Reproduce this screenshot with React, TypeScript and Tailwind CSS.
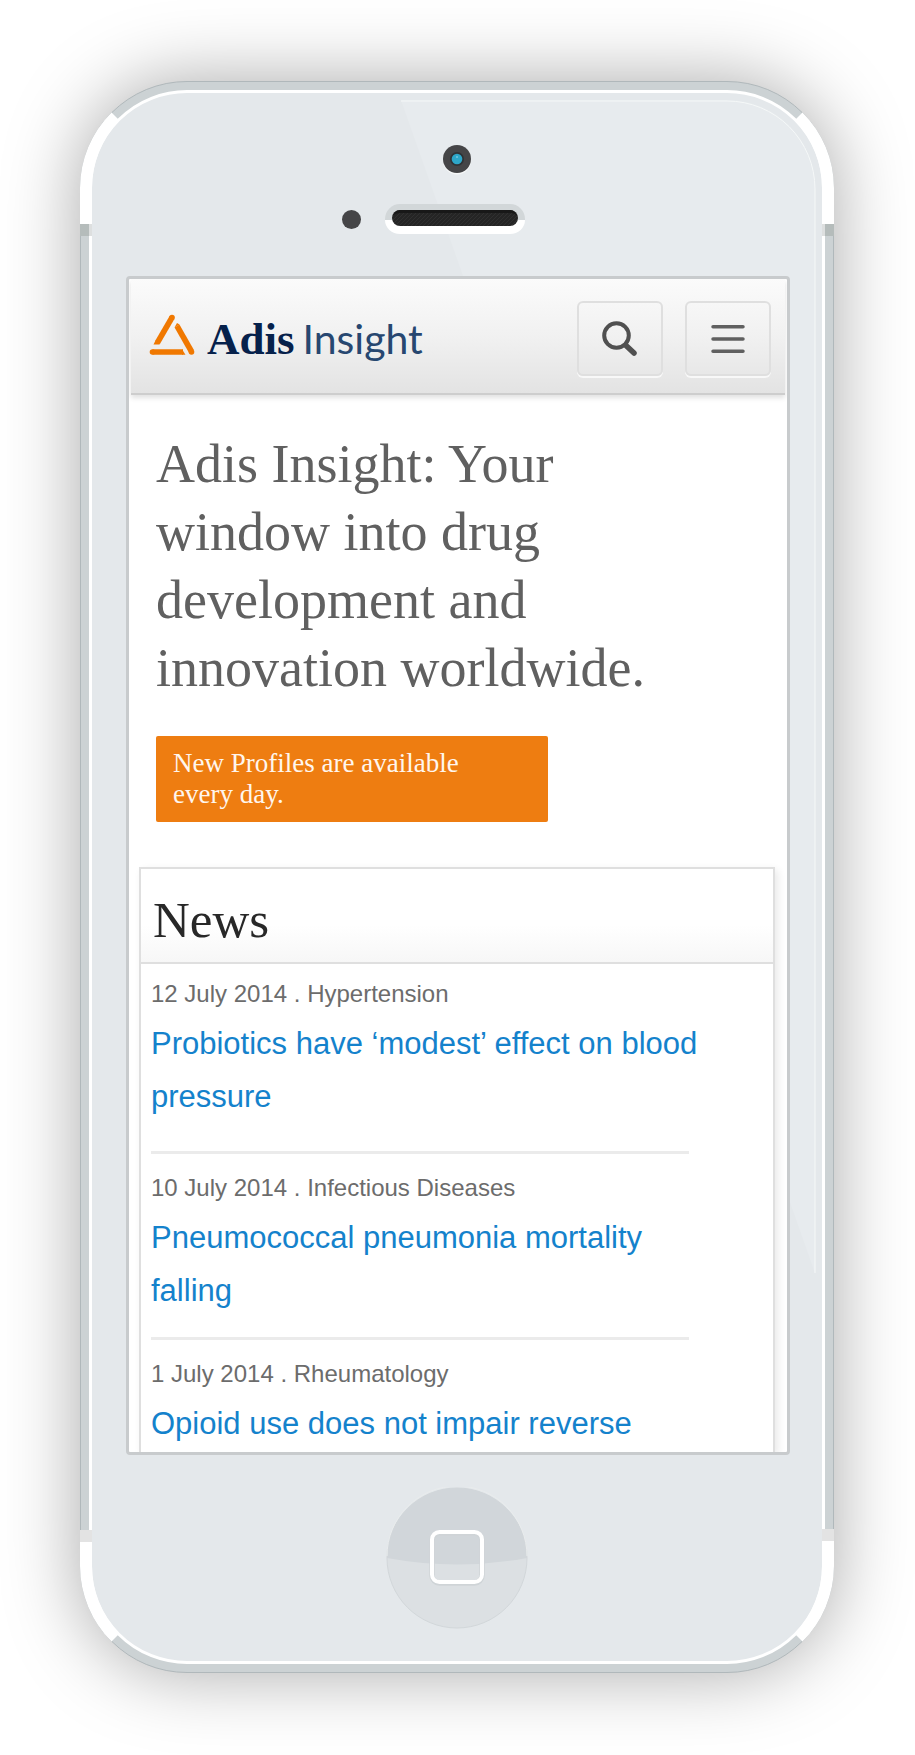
import React from "react";

type NewsItem = { date: string; topic: string; title: string; spacing: string };

const news: NewsItem[] = [
  { date: "12 July 2014", topic: "Hypertension", title: "Probiotics have ‘modest’ effect on blood pressure", spacing: "pt-3 pb-7" },
  { date: "10 July 2014", topic: "Infectious Diseases", title: "Pneumococcal pneumonia mortality falling", spacing: "pt-4 pb-5" },
  { date: "1 July 2014", topic: "Rheumatology", title: "Opioid use does not impair reverse", spacing: "pt-4 pb-[2px]" },
];

/* White antenna segment that wraps one corner of the metal rim. */
function CornerCap({ className }: { className: string }) {
  return (
    <svg aria-hidden="true" viewBox="0 0 42 143" className={`absolute h-[143px] w-[42px] ${className}`}>
      <path d="M0 143V107A107 107 0 0 1 31.5 31.5L39.5 39.5A95 95 0 0 0 12 107V143Z" fill="#fff" />
    </svg>
  );
}

/* The same segment for the lower corners, which is a little shorter. */
function LowerCap({ className }: { className: string }) {
  return (
    <svg aria-hidden="true" viewBox="0 0 42 132" className={`absolute h-[132px] w-[42px] ${className}`}>
      <path d="M0 0V25A107 107 0 0 0 31.5 100.5L39.5 92.5A95 95 0 0 1 12 25V0Z" fill="#fff" />
    </svg>
  );
}

function Gloss() {
  return (
    <svg aria-hidden="true" viewBox="0 0 415 1174" className="absolute top-[7px] right-[6px] h-[1174px] w-[415px]">
      <path d="M0 0H326A88 88 0 0 1 414 88V1173Z" fill="#e7ebee" />
      <path d="M0 1H326A88 88 0 0 1 414 89V1173" fill="none" stroke="#f5f8f8" strokeWidth="1" />
    </svg>
  );
}

function Logo() {
  return (
    <a href="#home" aria-label="Adis Insight" className="flex items-start">
      <svg aria-hidden="true" viewBox="0 0 46 44" className="mt-3 h-11 w-[46px] shrink-0">
        <g stroke="#f07800" strokeWidth="5.600" fill="none">
          <path d="M23 4.500L8.500 29.500" />
          <path d="M3.500 39H34" />
          <path d="M28 13L42.500 38.500" />
        </g>
        <circle cx="23" cy="4.500" r="2.800" fill="#f07800" />
        <circle cx="3.500" cy="39" r="2.800" fill="#f07800" />
        <circle cx="42.500" cy="39" r="2.800" fill="#f07800" />
        <path d="M4.500 31.500L10.500 31.500L11 30.500L6.500 27.500Z" fill="#f07800" />
        <path d="M33 36.200L36.500 41.800H33Z" fill="#f07800" />
        <path d="M25.500 14.500L28 10L30.500 11.600Z" fill="#f07800" />
      </svg>
      <span className="mt-2 ml-3 flex items-baseline gap-2 leading-[60px] whitespace-nowrap">
        <span className="font-['Liberation_Serif',serif] text-[45px] font-bold text-[#06214b]">Adis</span>
        <span className="font-['Lato',sans-serif] text-[41px] font-normal text-[#274770]">Insight</span>
      </span>
    </a>
  );
}

const toolButton =
  "flex h-[75px] w-[86px] items-center justify-center rounded-md border-2 border-[#dfdfdf] shadow-[0_2px_0_#f8f8f8]";

function SiteHeader() {
  return (
    <header className="mx-[2px] flex h-[116px] items-start justify-between border-b-2 border-[#cdcdcd] bg-linear-to-b from-[#fbfbfb] via-[#f1f1f1] to-[#e3e3e3] pt-[22px] pr-[14px] pl-[18px] shadow-[0_3px_5px_rgba(0,0,0,0.12)]">
      <Logo />
      <div className="flex gap-[22px]">
        <button type="button" aria-label="Search" className={toolButton}>
          <svg aria-hidden="true" viewBox="0 0 38 38" className="h-[38px] w-[38px]" fill="none" stroke="#505050">
            <circle cx="15.5" cy="15.5" r="12.3" strokeWidth="4" />
            <path d="M25 25.5L33 33" strokeWidth="5.500" strokeLinecap="round" />
          </svg>
        </button>
        <button type="button" aria-label="Menu" className={toolButton}>
          <svg aria-hidden="true" viewBox="0 0 34 30" className="h-[30px] w-[34px]" stroke="#606060" strokeWidth="3.500" strokeLinecap="round">
            <path d="M2 2.700H32M2 15H32M2 27.300H32" />
          </svg>
        </button>
      </div>
    </header>
  );
}

function Screen() {
  return (
    <main className="relative overflow-hidden rounded-[4px] border-[3px] border-[#c8cbcd] bg-white">
      <SiteHeader />
      <section className="pt-[35px] pr-16 pl-[27px]">
        <h1 className="max-w-[520px] font-['Liberation_Serif',serif] text-[54px] leading-[68px] text-[#606060]">
          Adis Insight: Your window into drug development and innovation worldwide.
        </h1>
        <p className="mt-[34px] max-w-[392px] rounded-[2px] bg-[#ee7d11] pt-[12px] pr-20 pb-3 pl-[17px] font-['Liberation_Serif',serif] text-[27px] leading-[31px] text-[#fff6ee]">
          New Profiles are available every day.
        </p>
      </section>
      <section className="mt-[45px] mr-3 ml-[10px] border-x-2 border-t-2 border-[#dfdfdf] shadow-[3px_3px_8px_rgba(0,0,0,0.09)]">
        <h2 className="border-b-2 border-[#dfdfdf] bg-linear-to-b from-white from-60% to-[#f7f7f7] pt-[21px] pb-[12px] pl-3 font-['Liberation_Serif',serif] text-[51px] leading-[60px] text-[#282828]">
          News
        </h2>
        <ul className="pr-[84px] pl-[10px] font-['Liberation_Sans',sans-serif]">
          {news.map((item, index) => (
            <li
              key={item.title}
              className={`${item.spacing} ${index < news.length - 1 ? "border-b-[3px] border-[#ebebeb]" : ""}`}
            >
              <p className="mb-[5px] text-[24px] leading-[36px] text-[#6c6c6c]">
                {item.date} . {item.topic}
              </p>
              <a href="#news" className="-mr-10 block text-[31px] leading-[53px] text-[#1482cc]">
                {item.title}
              </a>
            </li>
          ))}
        </ul>
      </section>
    </main>
  );
}

function Earpiece() {
  return (
    <svg aria-hidden="true" viewBox="0 0 140 30" className="h-[30px] w-[140px]">
      <defs>
        <pattern id="mesh" width="4" height="4" patternUnits="userSpaceOnUse">
          <rect width="4" height="4" fill="#252525" />
          <path d="M0 4L4 0" stroke="#303030" strokeWidth="1" />
        </pattern>
      </defs>
      <path d="M0 16V15A15 15 0 0 1 15 0H125A15 15 0 0 1 140 15V16Z" fill="#d2d7d9" />
      <path d="M0 16H140A15 14 0 0 1 125 30H15A15 14 0 0 1 0 16Z" fill="#fff" />
      <rect x="7" y="6" width="126" height="16" rx="8" fill="url(#mesh)" />
      <path d="M8 12A8 8 0 0 1 15 6H125A8 8 0 0 1 132 12A8 6 0 0 0 125 9H15A8 6 0 0 0 8 12Z" fill="#181818" />
    </svg>
  );
}

function HomeButton() {
  return (
    <button type="button" aria-label="Home" className="relative mx-auto mt-8 block h-[142px] w-[142px] rounded-full">
      <svg aria-hidden="true" viewBox="0 0 142 142" className="h-full w-full">
        <circle cx="71" cy="71" r="70" fill="#dce0e3" stroke="#d2d7da" />
        <path d="M1 71A70 70 0 0 1 141 71Q71 84 1 71Z" fill="#d1d6da" />
        <path d="M1 69A70 70 0 0 1 141 69" fill="none" stroke="#e9eced" />
        <rect x="46" y="46" width="50" height="50" rx="7.500" fill="none" stroke="#cfd4d7" strokeWidth="5.500" />
        <rect x="46" y="45" width="50" height="50" rx="7.500" fill="none" stroke="#fff" strokeWidth="4" />
      </svg>
    </button>
  );
}

export default function App() {
  return (
    <div className="min-h-screen overflow-hidden bg-white pt-[81px] pr-[81px] pb-20 pl-20">
      <div className="relative mx-auto max-w-[754px] rounded-[107px] border border-[#b0b8bb] bg-[#ccd2d4] p-2 shadow-[0_0_76px_rgba(0,0,0,0.34)]">
        <div className="relative rounded-[98px] border-[3px] border-white bg-[#e4e8eb] pt-[52px] pb-8">
          <Gloss />
          <svg aria-hidden="true" viewBox="0 0 30 30" className="relative mx-auto block h-[30px] w-[30px]">
            <circle cx="15" cy="15.500" r="14" fill="#f6f8f8" />
            <circle cx="15" cy="14" r="14" fill="#454547" />
            <circle cx="15" cy="14" r="7" fill="#2e3336" />
            <circle cx="15" cy="14" r="5.300" fill="#2da6c8" />
            <path d="M14 12H16" stroke="#9bd6e6" />
          </svg>
          <div className="relative mt-[29px] grid grid-cols-[1fr_auto_1fr] items-center gap-6 pr-1">
            <span className="h-[19px] w-[19px] justify-self-end rounded-full bg-[#454547]" />
            <Earpiece />
          </div>
          <div className="mt-[42px] pr-8 pl-[34px]">
            <Screen />
          </div>
          <HomeButton />
        </div>
        <CornerCap className="-top-px -left-px" />
        <CornerCap className="-top-px -right-px -scale-x-100" />
        <LowerCap className="-bottom-px -left-px" />
        <LowerCap className="-right-px -bottom-px -scale-x-100" />
        <span className="absolute top-[142px] -left-px h-3 w-3 border-r-[3px] border-[#dddfdf] bg-[#b5bcbb]" />
        <span className="absolute top-[142px] -right-px h-3 w-3 border-l-[3px] border-[#dddfdf] bg-[#b5bcbb]" />
        <span className="absolute bottom-[130px] -left-px h-3 w-3 bg-[#e3e3e3]" />
        <span className="absolute -right-px bottom-[131px] h-3 w-3 bg-[#e3e3e3]" />
      </div>
    </div>
  );
}
